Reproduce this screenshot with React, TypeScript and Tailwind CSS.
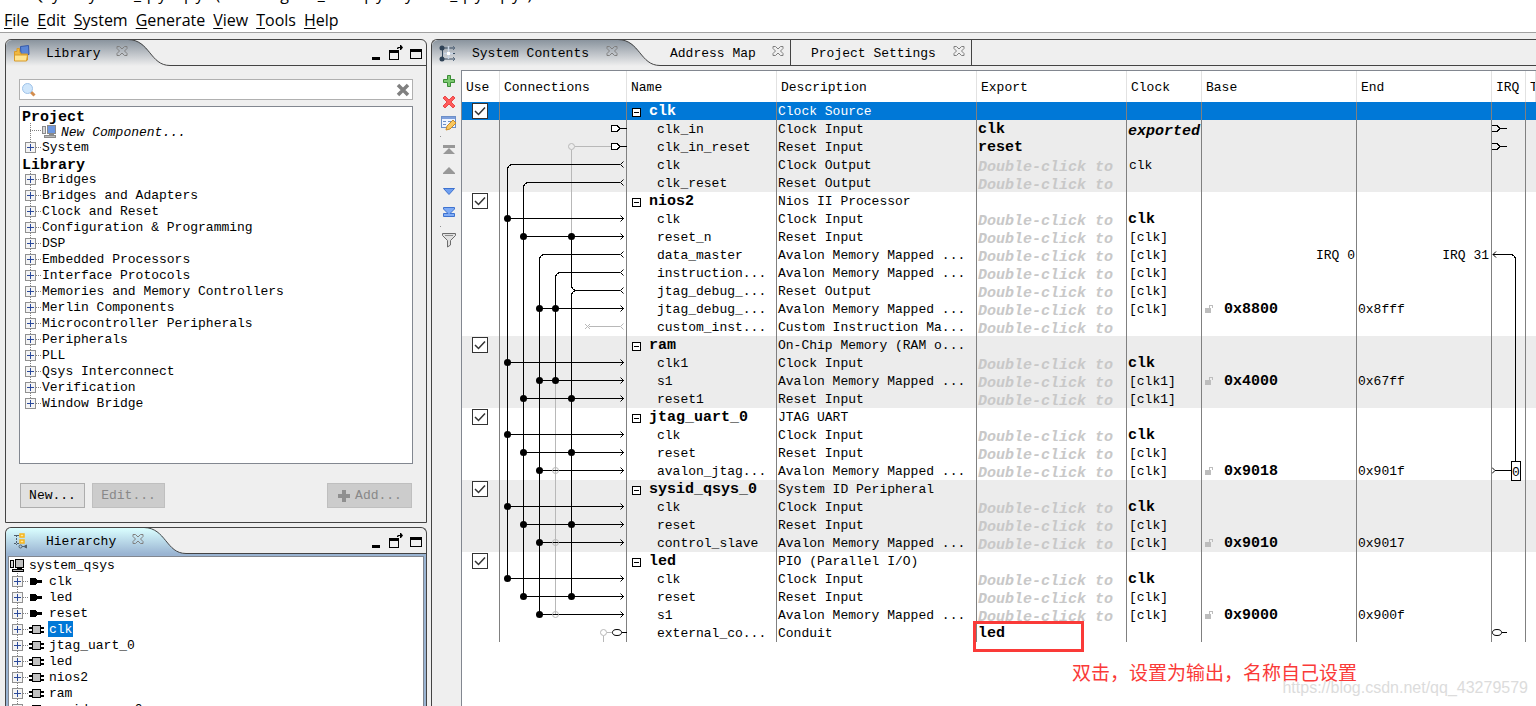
import { Fragment } from "react";
import type { ReactNode } from "react";
import { clsx } from "clsx";

const menus = ["File", "Edit", "System", "Generate", "View", "Tools", "Help"];

const libraryItems = [
  "Bridges",
  "Bridges and Adapters",
  "Clock and Reset",
  "Configuration & Programming",
  "DSP",
  "Embedded Processors",
  "Interface Protocols",
  "Memories and Memory Controllers",
  "Merlin Components",
  "Microcontroller Peripherals",
  "Peripherals",
  "PLL",
  "Qsys Interconnect",
  "Verification",
  "Window Bridge",
];

const hierarchyItems: { label: string; kind: "port" | "chip"; selected?: boolean }[] = [
  { label: "clk", kind: "port" },
  { label: "led", kind: "port" },
  { label: "reset", kind: "port" },
  { label: "clk", kind: "chip", selected: true },
  { label: "jtag_uart_0", kind: "chip" },
  { label: "led", kind: "chip" },
  { label: "nios2", kind: "chip" },
  { label: "ram", kind: "chip" },
  { label: "sysid_qsys_0", kind: "chip" },
];

type Port = {
  name: string;
  desc: string;
  exported?: string;
  clock?: string;
  clockStyle?: "bold" | "italic";
  base?: string;
  end?: string;
  irq?: boolean;
};

type Module = { name: string; desc: string; ports: Port[] };

const modules: Module[] = [
  {
    name: "clk",
    desc: "Clock Source",
    ports: [
      { name: "clk_in", desc: "Clock Input", exported: "clk", clock: "exported", clockStyle: "italic" },
      { name: "clk_in_reset", desc: "Reset Input", exported: "reset" },
      { name: "clk", desc: "Clock Output", clock: "clk" },
      { name: "clk_reset", desc: "Reset Output" },
    ],
  },
  {
    name: "nios2",
    desc: "Nios II Processor",
    ports: [
      { name: "clk", desc: "Clock Input", clock: "clk", clockStyle: "bold" },
      { name: "reset_n", desc: "Reset Input", clock: "[clk]" },
      { name: "data_master", desc: "Avalon Memory Mapped ...", clock: "[clk]", irq: true },
      { name: "instruction...", desc: "Avalon Memory Mapped ...", clock: "[clk]" },
      { name: "jtag_debug_...", desc: "Reset Output", clock: "[clk]" },
      { name: "jtag_debug_...", desc: "Avalon Memory Mapped ...", clock: "[clk]", base: "0x8800", end: "0x8fff" },
      { name: "custom_inst...", desc: "Custom Instruction Ma..." },
    ],
  },
  {
    name: "ram",
    desc: "On-Chip Memory (RAM o...",
    ports: [
      { name: "clk1", desc: "Clock Input", clock: "clk", clockStyle: "bold" },
      { name: "s1", desc: "Avalon Memory Mapped ...", clock: "[clk1]", base: "0x4000", end: "0x67ff" },
      { name: "reset1", desc: "Reset Input", clock: "[clk1]" },
    ],
  },
  {
    name: "jtag_uart_0",
    desc: "JTAG UART",
    ports: [
      { name: "clk", desc: "Clock Input", clock: "clk", clockStyle: "bold" },
      { name: "reset", desc: "Reset Input", clock: "[clk]" },
      { name: "avalon_jtag...", desc: "Avalon Memory Mapped ...", clock: "[clk]", base: "0x9018", end: "0x901f" },
    ],
  },
  {
    name: "sysid_qsys_0",
    desc: "System ID Peripheral",
    ports: [
      { name: "clk", desc: "Clock Input", clock: "clk", clockStyle: "bold" },
      { name: "reset", desc: "Reset Input", clock: "[clk]" },
      { name: "control_slave", desc: "Avalon Memory Mapped ...", clock: "[clk]", base: "0x9010", end: "0x9017" },
    ],
  },
  {
    name: "led",
    desc: "PIO (Parallel I/O)",
    ports: [
      { name: "clk", desc: "Clock Input", clock: "clk", clockStyle: "bold" },
      { name: "reset", desc: "Reset Input", clock: "[clk]" },
      { name: "s1", desc: "Avalon Memory Mapped ...", clock: "[clk]", base: "0x9000", end: "0x900f" },
      { name: "external_co...", desc: "Conduit", exported: "led" },
    ],
  },
];

// Centre line of the nth table row, rows are 18px high
const rowY = (n: number) => n * 18 + 8.5;

/* ---------- icons ---------- */

function CloseIcon() {
  return (
    <svg width="12" height="12" viewBox="0 0 12 12" fill="none" stroke="#808080">
      <path d="M1 1.5H3.5L6 4L8.5 1.5H11V3.5L8.5 6L11 8.5V10.5H8.5L6 8L3.5 10.5H1V8.5L3.5 6L1 3.5Z" />
    </svg>
  );
}

function LibraryIcon() {
  return (
    <svg width="17" height="17" viewBox="0 0 17 17">
      <path d="M7.5 1.5L15.5 0.5L16 9.5L8 10.5Z" fill="#5b86d6" stroke="#3558a8" />
      <path d="M1.5 6.5H4V3.5H6.5V6.5L8 9H14.5V15H1.5Z" fill="#f0b840" stroke="#d89b2b" />
      <path d="M1.5 10H14.5L13.5 16H1.5Z" fill="#ffe492" stroke="#d89b2b" />
    </svg>
  );
}

function HierarchyIcon() {
  return (
    <svg width="17" height="16" viewBox="0 0 17 16" fill="none">
      <path d="M3.5 2V12M1 2.5H6M1 10.5H6" stroke="#51606e" strokeDasharray="2 1" />
      <rect x="7" y="1" width="4" height="3" fill="#ffe79a" stroke="#f7b51c" strokeWidth="1.5" />
      <rect x="7" y="7" width="4" height="3" fill="#ffe79a" stroke="#f7b51c" strokeWidth="1.5" />
      <circle cx="7.5" cy="13.5" r="1.5" stroke="#51606e" />
      <path d="M9 13.5H11L13.5 12V15L11 13.5" fill="#51606e" stroke="#51606e" />
    </svg>
  );
}

function ContentsIcon() {
  return (
    <svg width="17" height="17" viewBox="0 0 17 17" fill="none">
      <path d="M3.5 3V14M3 3H15M3 14H15M13 8.5H16" stroke="#34495e" />
      <path d="M9.5 1V14M5 8.5H14" stroke="#c9d6e6" strokeWidth="1.5" />
      <circle cx="3" cy="3" r="2.5" fill="#2f4256" />
      <circle cx="3" cy="14" r="2.5" fill="#2f4256" />
      <rect x="8" y="7" width="3" height="3" fill="#fff" />
      <path d="M14 1L16 3L14 5M14 12L16 14L14 16" stroke="#5c6e82" />
    </svg>
  );
}

function WindowButtons() {
  return (
    <div className="flex items-end">
      <button className="pr-2" aria-label="Minimize">
        <svg className="block" width="9" height="15" viewBox="0 0 9 15">
          <path d="M0 12H8V15H0Z" />
        </svg>
      </button>
      <button className="pr-[7px]" aria-label="Detach">
        <svg className="block" width="14" height="15" viewBox="0 0 14 15">
          <path d="M0 5H10V15H0ZM1 8V14H9V8Z" fillRule="evenodd" />
          <path d="M8 4V3L9 2H11V0H12L14 2.5L12 5H11V3H10L9 4Z" />
        </svg>
      </button>
      <button aria-label="Maximize">
        <svg className="block" width="12" height="15" viewBox="0 0 12 15">
          <path d="M0 4H12V14H0ZM1 7V13H11V7Z" fillRule="evenodd" />
        </svg>
      </button>
    </div>
  );
}

function Expander({ end = false }: { end?: boolean }) {
  return (
    <svg className="shrink-0" width="17" height="16" viewBox="0 0 17 16" fill="none" shapeRendering="crispEdges">
      <path d={end ? "M5.5 0V8" : "M5.5 0V16"} stroke="#808080" strokeDasharray="1 1" />
      <path d="M11 8.5H17" stroke="#808080" strokeDasharray="1 1" />
      <rect x="0.5" y="3.5" width="10" height="10" fill="#f4f4f4" stroke="#919191" />
      <path d="M2 8.5H9M5.5 5V12" stroke="#2b4a9b" />
    </svg>
  );
}

function SystemIcon({ tint, edge }: { tint: string; edge: string }) {
  return (
    <svg className="shrink-0" width="15" height="14" viewBox="0 0 15 14">
      <rect x="0.5" y="2.5" width="3" height="7" fill="#d8d8d8" stroke={edge} />
      <rect x="5.5" y="1.5" width="8" height="8" fill={tint} stroke={edge} />
      <path d="M7 10H12V12H7Z" fill={edge} />
      <rect x="2.5" y="11.5" width="11" height="2" fill="#b8b8b8" stroke={edge} />
    </svg>
  );
}

function NodeIcon({ kind }: { kind: "port" | "chip" }) {
  return (
    <svg className="shrink-0" width="15" height="16" viewBox="0 0 15 16" shapeRendering="crispEdges">
      {kind === "port" ? (
        <path d="M1 5H6L8 7H13V10H8L6 12H1Z" />
      ) : (
        <>
          <path d="M0 6H15V8H0ZM0 10H15V12H0Z" />
          <rect x="3.5" y="4.5" width="8" height="8" fill="#c0c0c0" stroke="#000" />
        </>
      )}
    </svg>
  );
}

function LockIcon() {
  return (
    <svg width="9" height="12" viewBox="0 0 9 12" shapeRendering="crispEdges" className="shrink-0">
      <path d="M0 4H6V9H0Z" fill="#bdbdbd" />
      <path d="M4.5 4V1.5H7.5V4" fill="none" stroke="#bdbdbd" />
    </svg>
  );
}

/* ---------- toolbar ---------- */

const tools: { label: string; icon: ReactNode; gapAfter?: boolean }[] = [
  {
    label: "Add",
    icon: <path d="M6.5 2.5H9.5V6.5H13.5V9.5H9.5V13.5H6.5V9.5H2.5V6.5H6.5Z" fill="#7cc870" stroke="#3b8d35" />,
  },
  {
    label: "Remove",
    icon: <path d="M4 2L8 6L12 2L14 4L10 8L14 12L12 14L8 10L4 14L2 12L6 8L2 4Z" fill="#ff5b5b" stroke="#e84a4a" />,
  },
  {
    label: "Edit",
    gapAfter: true,
    icon: (
      <>
        <rect x="0.5" y="1.5" width="14" height="11" fill="#eef4ff" stroke="#6d8fc7" />
        <path d="M1 2H14V4H1Z" fill="#7fa0dc" />
        <path d="M2 6.5H5M2 9.5H5M7 6.5H11" stroke="#6d8fc7" />
        <path d="M5 15L6 11L12 5L15 8L9 14Z" fill="#f9c860" stroke="#c98a28" />
      </>
    ),
  },
  { label: "Move to top", icon: <path d="M2 3H14V6H2ZM8 6L14 12H2Z" fill="#989898" /> },
  { label: "Move up", icon: <path d="M8 4L14 10V11H2V10Z" fill="#989898" /> },
  { label: "Move down", icon: <path d="M2.5 4.5H13.5L8 10.5Z" fill="#6f9ff0" stroke="#3e72cf" /> },
  {
    label: "Move to bottom",
    gapAfter: true,
    icon: <path d="M2.5 2.5H13.5V4L9 8.5H13.5V11.5H2.5V8.5H7L2.5 4Z" fill="#7fabf5" stroke="#3e72cf" />,
  },
  {
    label: "Filter",
    icon: (
      <>
        <path d="M1.5 1.5H14.5V3.5L9.5 8.5V13L6.5 15V8.5L1.5 3.5Z" fill="#e0e0e0" stroke="#6c6c6c" />
        <path d="M4 3.5H12" stroke="#8c8c8c" />
      </>
    ),
  },
];

function Toolbar() {
  return (
    <div className="flex w-[29px] shrink-0 flex-col items-center gap-[5px] pt-[3px] pl-1">
      {tools.map((tool) => (
        <Fragment key={tool.label}>
          <button aria-label={tool.label}>
            <svg className="block" width="16" height="16" viewBox="0 0 16 16">
              {tool.icon}
            </svg>
          </button>
          {tool.gapAfter && <span className="mr-4 size-px bg-[#909090]" />}
        </Fragment>
      ))}
    </div>
  );
}

/* ---------- panels ---------- */

type TabProps = { label: string; labelWidth: string };

function TabLabel({ label, labelWidth }: TabProps) {
  return (
    <>
      <button className={clsx("pt-0.5 text-left text-[13px] whitespace-nowrap", labelWidth)}>{label}</button>
      <button className="mb-1 ml-3.5" aria-label={`Close ${label}`}>
        <CloseIcon />
      </button>
    </>
  );
}

function ActiveTab({ icon, tone, ...label }: TabProps & { icon: ReactNode; tone: "gray" | "blue" }) {
  const blue = tone === "blue";
  return (
    <div className="flex h-[26px] shrink-0">
      <div
        className={clsx(
          "flex items-center rounded-tl-md bg-linear-to-b pl-[7px]",
          blue ? "from-[#dbffff] to-[#9ab4d2]" : "from-[#8a949e] to-[#efefef]",
        )}
      >
        <span className="mr-4">{icon}</span>
        <TabLabel {...label} />
      </div>
      <svg width="42" height="26" viewBox="0 0 42 26" fill="none">
        <defs>
          <linearGradient id={`tab-${tone}`} x1="0" y1="0" x2="0" y2="1">
            <stop offset="0" stopColor={blue ? "#dbffff" : "#8a949e"} />
            <stop offset="1" stopColor={blue ? "#9ab4d2" : "#efefef"} />
          </linearGradient>
        </defs>
        <path d="M0 0H4C22 2 22 23 40 25.5L42 26H0Z" fill={`url(#tab-${tone})`} />
        <path d="M0 -0.5C22 0 22 25.5 42 25.5" stroke="#444" />
      </svg>
    </div>
  );
}

function InactiveTab(label: TabProps) {
  return (
    <div className="flex items-center border-r border-b border-[#444] pr-1.5 pl-5 first:pl-2.5">
      <TabLabel {...label} />
    </div>
  );
}

function LibraryPanel() {
  return (
    <section className="h-[484px] shrink-0 rounded-t-md border border-[#444]">
      <header className="flex">
        <ActiveTab icon={<LibraryIcon />} label="Library" labelWidth="w-14" tone="gray" />
        <div className="flex flex-1 items-end justify-end border-b border-[#444] pr-1 pb-[5px]">
          <WindowButtons />
        </div>
      </header>

      <div className="px-[13px] pt-[13px]">
        <label className="flex h-[21px] items-center border border-[#b0b0b0] bg-white pr-0.5 pl-0.5">
          <svg width="14" height="14" viewBox="0 0 14 14" aria-hidden="true">
            <path d="M8 8L12.5 12.5" stroke="#d38d4e" strokeWidth="3" />
            <circle cx="5.5" cy="5.5" r="5" fill="#cfe6fb" stroke="#9fc2e8" />
          </svg>
          <input aria-label="Search library" className="min-w-0 flex-1 bg-transparent px-1 text-[13px] outline-none" />
          <button aria-label="Clear search">
            <svg className="block" width="14" height="14" viewBox="0 0 14 14">
              <path d="M2 2L12 12M12 2L2 12" stroke="#808080" strokeWidth="3.5" />
            </svg>
          </button>
        </label>

        <ul className="mt-1.5 h-[358px] overflow-hidden border border-[#828790] bg-white text-[13px] leading-4">
          <li className="h-4 pt-[3px] pl-0.5 text-[15px] font-bold">Project</li>
          <li className="flex h-4 items-center pl-[5px]">
            <svg className="shrink-0" width="17" height="16" viewBox="0 0 17 16" fill="none" shapeRendering="crispEdges">
              <path d="M5.5 0V16M5 7.5H17" stroke="#808080" strokeDasharray="1 1" />
            </svg>
            <SystemIcon tint="#6d97e0" edge="#8a8a8a" />
            <span className="pt-1 pl-1 italic">New Component...</span>
          </li>
          <li className="flex h-4 items-center pl-[5px]">
            <Expander end />
            <span className="pt-0.5">System</span>
          </li>
          <li className="h-4 pt-[3px] pl-0.5 text-[15px] font-bold">Library</li>
          {libraryItems.map((item, i) => (
            <li key={item} className="flex h-4 items-center pl-[5px]">
              <Expander end={i === libraryItems.length - 1} />
              <span className="pt-0.5">{item}</span>
            </li>
          ))}
        </ul>

        <div className="mt-[19px] flex gap-[7px] px-px text-[13px]">
          <button className="h-[25px] w-[65px] border border-[#adadad] bg-[#e1e1e1]">New...</button>
          <button disabled className="h-[25px] w-[73px] border border-[#bfbfbf] bg-[#ccc] text-[#888]">
            Edit...
          </button>
          <button
            disabled
            className="ml-auto flex h-[25px] w-[85px] items-center justify-center gap-1 border border-[#bfbfbf] bg-[#ccc] text-[#888]"
          >
            <svg width="14" height="14" viewBox="0 0 14 14">
              <path d="M5 1H9V5H13V9H9V13H5V9H1V5H5Z" fill="#8f8f8f" />
            </svg>
            Add...
          </button>
        </div>
      </div>
    </section>
  );
}

function HierarchyPanel() {
  return (
    <section className="flex min-h-0 flex-1 flex-col rounded-t-md border border-b-0 border-[#444] bg-[#efefef]">
      <header className="flex">
        <ActiveTab icon={<HierarchyIcon />} label="Hierarchy" labelWidth="w-18" tone="blue" />
        <div className="flex flex-1 items-end justify-end border-b border-[#444] pr-1 pb-[5px]">
          <WindowButtons />
        </div>
      </header>
      <div className="min-h-0 flex-1 bg-[#9ab4d2] px-0.5 pt-0.5">
        <ul className="h-full overflow-hidden border border-b-0 border-[#828790] bg-white text-[13px] leading-4">
          <li className="flex h-4 items-center gap-1 pl-px">
            <SystemIcon tint="#c0c0c0" edge="#000" />
            <span className="pt-0.5">system_qsys</span>
          </li>
          {hierarchyItems.map((item, i) => (
            <li key={i} className="flex h-4 items-center pl-[3px]">
              <Expander />
              <NodeIcon kind={item.kind} />
              <span className={clsx("ml-1 h-4 px-px pt-px", item.selected && "bg-[#0078d7] text-white")}>
                {item.label}
              </span>
            </li>
          ))}
        </ul>
      </div>
    </section>
  );
}

/* ---------- system contents ---------- */

function Dot({ x, row, open = false }: { x: number; row: number; open?: boolean }) {
  return (
    <circle
      cx={x}
      cy={rowY(row)}
      r={open ? 3 : 3.5}
      fill={open ? "none" : "#000"}
      stroke={open ? "#b8b8b8" : "none"}
      shapeRendering="auto"
    />
  );
}

const clockRows = [6, 14, 18, 22, 26];
const resetRows = [7, 16, 19, 23, 27];
const dataRows = [11, 15, 20, 24, 28];
const sharedRows = [11, 15];

function ConnectionsDiagram() {
  const arrow = (x: number, row: number) => (
    <g key={row}>
      <path d={`M${x} ${rowY(row)}H124`} />
      <path d={`M120.5 ${rowY(row) - 3}L123.5 ${rowY(row)}L120.5 ${rowY(row) + 3}`} shapeRendering="auto" />
    </g>
  );
  const source = (row: number) => (
    <path d={`M123.5 ${rowY(row) - 3}L120.5 ${rowY(row)}L123.5 ${rowY(row) + 3}`} shapeRendering="auto" />
  );

  return (
    <svg
      className="pointer-events-none absolute top-0 left-0"
      width="127"
      height="540"
      viewBox="0 0 127 540"
      fill="none"
      stroke="#000"
      shapeRendering="crispEdges"
    >
      {/* possible but unused links */}
      <g stroke="#b8b8b8">
        <path d={`M71.5 ${rowY(2) + 3}V${rowY(7)}M75 ${rowY(2)}H111`} />
        <path d={`M55.5 ${rowY(15)}V${rowY(28)}`} />
        <path d={`M103.5 ${rowY(29) + 3}V540M107 ${rowY(29)}H112`} />
        <path d={`M89 ${rowY(12)}H120`} />
        {source(12)}
        <path
          d={`M85 ${rowY(12) - 2.5}L90 ${rowY(12) + 2.5}M90 ${rowY(12) - 2.5}L85 ${rowY(12) + 2.5}`}
          shapeRendering="auto"
        />
      </g>

      {/* exported pins */}
      {[1, 2].map((row) => (
        <path
          key={row}
          d={`M111.5 ${rowY(row) - 3}H117L120 ${rowY(row)}L117 ${rowY(row) + 3}H111.5ZM120 ${rowY(row)}H127`}
          fill="#fff"
        />
      ))}
      <ellipse cx="117" cy={rowY(29)} rx="4.5" ry="3" shapeRendering="auto" />
      <path d={`M122 ${rowY(29)}H127`} />

      {/* buses */}
      <path d={`M120 ${rowY(3)}H13Q7.5 ${rowY(3)} 7.5 ${rowY(3) + 6}V${rowY(26)}`} />
      <path d={`M120 ${rowY(4)}H29Q23.5 ${rowY(4)} 23.5 ${rowY(4) + 6}V${rowY(27)}`} />
      <path d={`M120 ${rowY(8)}H45Q39.5 ${rowY(8)} 39.5 ${rowY(8) + 6}V${rowY(28)}`} />
      <path d={`M120 ${rowY(9)}H61Q55.5 ${rowY(9)} 55.5 ${rowY(9) + 6}V${rowY(15)}`} />
      <path d={`M71.5 ${rowY(7)}V${rowY(10) - 6}Q71.5 ${rowY(10)} 77 ${rowY(10)}H120`} />
      <path d={`M77 ${rowY(10)}Q71.5 ${rowY(10)} 71.5 ${rowY(10) + 6}V${rowY(27)}`} />
      {source(3)}
      {source(4)}
      {source(8)}
      {source(9)}
      {source(10)}

      {clockRows.map((row) => arrow(7.5, row))}
      {resetRows.map((row) => arrow(23.5, row))}
      {dataRows.map((row) => arrow(39.5, row))}

      {clockRows.map((row) => (
        <Dot key={row} x={7.5} row={row} />
      ))}
      {resetRows.map((row) => (
        <Fragment key={row}>
          <Dot x={23.5} row={row} />
          <Dot x={71.5} row={row} />
        </Fragment>
      ))}
      {dataRows.map((row) => (
        <Fragment key={row}>
          <Dot x={39.5} row={row} />
          <Dot x={55.5} row={row} open={!sharedRows.includes(row)} />
        </Fragment>
      ))}
      <Dot x={71.5} row={2} open />
      <Dot x={103.5} row={29} open />
    </svg>
  );
}

function IrqDiagram() {
  return (
    <svg
      className="pointer-events-none absolute top-0 left-0"
      width="33"
      height="540"
      viewBox="0 0 33 540"
      fill="none"
      stroke="#000"
      shapeRendering="crispEdges"
    >
      {[1, 2].map((row) => (
        <path key={row} d={`M0 ${rowY(row) - 3}H5L8 ${rowY(row)}L5 ${rowY(row) + 3}H0M8 ${rowY(row)}H15`} />
      ))}
      <path d={`M1 ${rowY(8)}H18Q23.5 ${rowY(8)} 23.5 ${rowY(8) + 6}V359`} />
      <path d={`M4 ${rowY(8) - 3}L1 ${rowY(8)}L4 ${rowY(8) + 3}`} shapeRendering="auto" />
      <path d={`M0 ${rowY(20) - 3}L3 ${rowY(20)}L0 ${rowY(20) + 3}`} shapeRendering="auto" />
      <path d={`M3 ${rowY(20)}H19`} />
      <rect x="19.5" y="359.5" width="9" height="19" fill="#fff" />
      <text x="20" y="374" fill="#000" stroke="none" fontSize="13">
        0
      </text>
      <ellipse cx="5" cy={rowY(29)} rx="4.5" ry="3" shapeRendering="auto" />
      <path d={`M10 ${rowY(29)}H15`} />
    </svg>
  );
}

function UseCheckbox({ name }: { name: string }) {
  return (
    <label className="grid size-4">
      <input
        type="checkbox"
        defaultChecked
        aria-label={`Use ${name}`}
        className="peer col-start-1 row-start-1 size-4 appearance-none border border-[#333] bg-white"
      />
      <svg
        className="invisible col-start-1 row-start-1 peer-checked:visible"
        width="16"
        height="16"
        viewBox="0 0 16 16"
        fill="none"
      >
        <path d="M3 8L6.5 11.5L13 4.5" stroke="#333" strokeWidth="1.5" />
      </svg>
    </label>
  );
}

const columns = [
  { label: "Use", width: "w-[38px]" },
  { label: "Connections", width: "w-[127px]" },
  { label: "Name", width: "w-[150px]" },
  { label: "Description", width: "w-[200px]" },
  { label: "Export", width: "w-[150px]" },
  { label: "Clock", width: "w-[75px]" },
  { label: "Base", width: "w-[155px]" },
  { label: "End", width: "w-[135px]" },
  { label: "IRQ", width: "w-[34px]" },
  { label: "Tags", width: "w-auto" },
];

const cell = "h-[18px] border-r border-[#808080] p-0";
const textCell = "h-[18px] border-r border-[#808080] pt-0.5";

function Annotation() {
  return (
    <>
      <div className="absolute -top-[3px] -left-1 h-[31px] w-[111px] border-3 border-[#fa3a38]" />
      <p className="absolute top-[34px] left-[95px] font-['Noto_Sans_CJK_SC',sans-serif] text-[19px] leading-7 font-normal whitespace-nowrap text-[#fa3a38]">
        双击，设置为输出，名称自己设置
      </p>
    </>
  );
}

function ModuleRows({ module, index }: { module: Module; index: number }) {
  const first = index === 0;
  return (
    <tbody className={index % 2 === 0 ? "bg-[#ececec]" : "bg-white"}>
      <tr className={clsx(first && "bg-[#0078d7] text-white")}>
        <td className={clsx(cell, "pl-2.5")}>
          <UseCheckbox name={module.name} />
        </td>
        <td className={clsx(cell, "relative")}>{first && <ConnectionsDiagram />}</td>
        <td className={clsx(textCell, "pl-[5px]")}>
          <div className="flex items-center gap-2 text-[15px] leading-4 font-bold">
            <svg width="9" height="9" viewBox="0 0 9 9" shapeRendering="crispEdges">
              <rect x="0.5" y="0.5" width="8" height="8" fill="#fff" stroke="#000" />
              <path d="M2 4.5H7" stroke="#000" />
            </svg>
            {module.name}
          </div>
        </td>
        <td className={clsx(textCell, "pl-px")}>{module.desc}</td>
        <td className={cell} />
        <td className={cell} />
        <td className={cell} />
        <td className={cell} />
        <td className={clsx(cell, "relative")}>{first && <IrqDiagram />}</td>
        <td className="p-0" />
      </tr>
      {module.ports.map((port, i) => (
        <tr key={i}>
          <td className={cell} />
          <td className={cell} />
          <td className={clsx(textCell, "pl-[30px]")}>{port.name}</td>
          <td className={clsx(textCell, "pl-px")}>{port.desc}</td>
          <td className={clsx(textCell, "relative pl-px text-[15px] leading-4 font-bold")}>
            {port.exported ?? <div className="h-4 pt-0.5 text-[#c8c8c8] italic">Double-click to</div>}
            {port.exported === "led" && <Annotation />}
          </td>
          <td className={clsx(textCell, port.clockStyle ? "pl-px text-[15px] leading-4 font-bold" : "pl-0.5")}>
            {port.clockStyle === "italic" ? <div className="h-4 pt-0.5 italic">{port.clock}</div> : port.clock}
          </td>
          <td className={clsx(textCell, "pr-px pl-[3px]")}>
            {port.base && (
              <div className="flex items-center gap-2.5 text-[15px] leading-4 font-bold">
                <LockIcon />
                {port.base}
              </div>
            )}
            {port.irq && <div className="text-right">IRQ 0</div>}
          </td>
          <td className={clsx(textCell, "pr-0.5 pl-px")}>
            {port.end}
            {port.irq && <div className="text-right">IRQ 31</div>}
          </td>
          <td className={cell} />
          <td className="p-0" />
        </tr>
      ))}
    </tbody>
  );
}

function SystemContents() {
  return (
    <section className="flex min-w-0 flex-1 flex-col rounded-tl-md border-t border-l border-[#444]">
      <header className="flex">
        <ActiveTab icon={<ContentsIcon />} label="System Contents" labelWidth="w-30" tone="gray" />
        <div className="flex">
          <InactiveTab label="Address Map" labelWidth="w-22" />
          <InactiveTab label="Project Settings" labelWidth="w-32" />
        </div>
        <div className="flex-1 border-b border-[#444]" />
      </header>

      <div className="flex min-h-0 flex-1 pt-1">
        <Toolbar />
        <div className="min-w-0 flex-1 overflow-hidden border-t border-l border-[#828790] bg-white">
          <table className="w-full table-fixed border-separate border-spacing-0 text-[13px] leading-4 whitespace-nowrap">
            <thead>
              <tr>
                {columns.map((col) => (
                  <th
                    key={col.label}
                    className={clsx(
                      "h-[31px] overflow-hidden border-r border-[#e2e2e2] pt-0.5 pl-1 text-left font-normal",
                      col.width,
                    )}
                  >
                    {col.label}
                  </th>
                ))}
              </tr>
            </thead>
            {modules.map((module, i) => (
              <ModuleRows key={module.name} module={module} index={i} />
            ))}
          </table>
        </div>
      </div>
    </section>
  );
}

export default function App() {
  return (
    <div className="relative flex h-screen flex-col overflow-hidden bg-[#efefef] font-['Liberation_Mono',monospace] text-black">
      <div className="flex h-2 shrink-0 items-end overflow-hidden bg-white pl-8 font-['Open_Sans',sans-serif] text-[16px] leading-7 whitespace-nowrap">
        Qsys - system_qsys.qsys (E:\verilog\led_test\qsys\system_qsys.qsys)
      </div>
      <nav className="flex h-[25px] shrink-0 items-center gap-2 border-b border-[#a0a0a0] bg-white pl-1 font-['Open_Sans',sans-serif] text-[16px]">
        {menus.map((menu) => (
          <button key={menu}>
            <span className="underline underline-offset-2">{menu[0]}</span>
            {menu.slice(1)}
          </button>
        ))}
      </nav>

      <main className="flex min-h-0 flex-1 gap-1 pt-1.5 pl-[5px]">
        <div className="flex w-[422px] shrink-0 flex-col gap-1">
          <LibraryPanel />
          <HierarchyPanel />
        </div>
        <SystemContents />
      </main>

      <p className="absolute right-2 bottom-1.5 font-['Liberation_Sans',sans-serif] text-[16px] leading-6 text-[#dcdcdc]">
        https://blog.csdn.net/qq_43279579
      </p>
    </div>
  );
}
